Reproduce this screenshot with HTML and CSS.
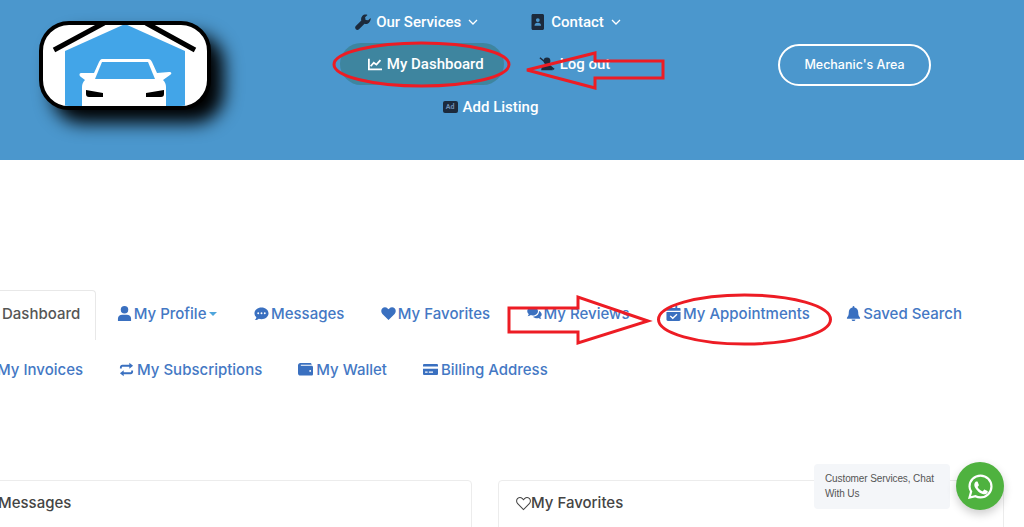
FILE: index.html

```html
<!DOCTYPE html>
<html lang="en">
<head>
  <meta charset="UTF-8" />
  <meta name="viewport" content="width=device-width, initial-scale=1.0" />
  <title>My Dashboard</title>
  <link rel="stylesheet" href="styles.css">
</head>
<body>
  <header class="site-header">
    <a class="logo" href="#">
      <svg viewBox="43 25 164 81" width="164" height="81">
        <path fill="#42a5e8" d="M65 106V51l60-27 60 27v55z"/>
        <path stroke="#000" stroke-width="5" fill="none" d="M54 50l50-27M146 23l49 27"/>
        <path fill="#fff" d="M102 59h46c2 0 3 1 4 3l5 11 12-1c3 0 3 2 1 3l-7 5c2 2 3 4 3 7v19H82V87c0-3 1-5 3-7l-4-3c-2-1-2-4 0-4l13 0 5-11c1-2 2-3 3-3z"/>
        <path fill="#42a5e8" d="M102 62h46l7 17H95z"/>
        <path fill="#000" d="M86 90l17 3v4H89c-2 0-3-1-3-3zM164 90l-18 3v4h15c2 0 3-1 3-3z"/>
      </svg>
    </a>
    <nav class="main-nav">
      <a class="nav-link" href="#">
        <svg class="nav-icon" viewBox="0 0 16 16"><path d="M15.6 3.9l-2.4 2.4-2.6-.4-.5-2.6L12.5.9C10.600.2 8.500.7 7.300 2 6.100 3.200 5.800 5 6.300 6.500L.8 12c-.9.900-.9 2.300 0 3.200.9.900 2.300.9 3.200 0l5.500-5.500c1.500.5 3.300.2 4.500-1 1.300-1.300 1.900-3.100 1.600-4.800z"/></svg>
        Our Services
        <svg class="chevron" viewBox="0 0 10 6"><path d="M1 1l4 4 4-4"/></svg>
      </a>
      <a class="nav-link" href="#">
        <svg class="nav-icon" viewBox="0 0 16 16"><path fill-rule="evenodd" d="M3 0h9.500C13.300 0 14 .7 14 1.500v13c0 .8-.7 1.500-1.500 1.500H3c-.8 0-1.500-.7-1.500-1.500v-13C1.500.7 2.200 0 3 0zm4.800 4.200a1.900 1.900 0 100 3.800 1.900 1.900 0 000-3.800zM4.500 11.800h6.600c0-1.700-1.200-3-3.300-3s-3.300 1.300-3.300 3z"/></svg>
        Contact
        <svg class="chevron" viewBox="0 0 10 6"><path d="M1 1l4 4 4-4"/></svg>
      </a>
      <a class="nav-link nav-active" href="#">
        <svg class="nav-icon icon-white" viewBox="0 0 16 16"><path d="M0 2h2v11h14v2H0z"/><path d="M3 10.500l3.500-4 3 2.200 4.500-5" fill="none" stroke="#fff" stroke-width="2"/></svg>
        My Dashboard
      </a>
      <a class="nav-link" href="#">
        <svg class="nav-icon" viewBox="0 0 18 16"><circle cx="9" cy="4.500" r="3.800"/><path d="M2.500 15c0-3.500 2.500-5.500 6.500-5.500s6.500 2 6.500 5.500z"/><path d="M1 1l16 13" stroke="#1c2a3c" stroke-width="1.600"/></svg>
        Log out
      </a>
      <a class="nav-link nav-listing" href="#">
        <span class="ad-badge">Ad</span>
        Add Listing
      </a>
    </nav>
    <a class="area-btn" href="#">Mechanic's Area</a>
  </header>

  <main class="dashboard">
    <ul class="tabs">
      <li class="tab tab-active"><a href="#">Dashboard</a></li>
      <li class="tab"><a href="#">
        <svg viewBox="0 0 16 16"><circle cx="8" cy="4" r="4"/><path d="M1 16v-2.500C1 11 3 9.300 5.500 9.300h5c2.500 0 4.500 1.700 4.500 4.200V16z"/></svg>
        My Profile<span class="caret"></span></a></li>
      <li class="tab"><a href="#">
        <svg viewBox="0 0 16 16"><path fill-rule="evenodd" d="M8 1.500c4.200 0 7.500 2.800 7.500 6.200S12.200 14 8 14c-1 0-2-.2-2.900-.5C4.300 14.200 2.800 15 .8 15c1-1 1.600-2.200 1.700-3.100C1.200 10.800.5 9.300.5 7.700.5 4.300 3.800 1.500 8 1.500zM4.500 6.700a1 1 0 100 2 1 1 0 000-2zm3.500 0a1 1 0 100 2 1 1 0 000-2zm3.500 0a1 1 0 100 2 1 1 0 000-2z"/></svg>
        Messages</a></li>
      <li class="tab"><a href="#">
        <svg viewBox="0 0 16 16"><path d="M8 15L1.500 8.400C-.2 6.600-.1 3.900 1.500 2.400 3.100.9 5.600 1.100 7.100 2.600L8 3.500l.9-.9c1.500-1.500 4-1.700 5.600-.2 1.600 1.500 1.700 4.200 0 6z"/></svg>
        My Favorites</a></li>
      <li class="tab"><a href="#">
        <svg viewBox="0 0 16 16"><path d="M6 1c3.200 0 5.700 2 5.700 4.500S9.200 10 6 10c-.7 0-1.400-.1-2-.3C3.200 10.300 2 10.800.7 10.800c.7-.7 1.100-1.500 1.200-2.200C.9 7.800.3 6.700.3 5.500.3 3 2.800 1 6 1z"/><path d="M12.800 5.200c1.700.7 2.900 2.100 2.900 3.700 0 1.100-.5 2-1.500 2.800.1.700.5 1.400 1.100 2-1.100 0-2.200-.4-2.900-1-.6.200-1.200.3-1.800.3-1.700 0-3.200-.6-4.100-1.600 3.400-.1 6.300-2.500 6.300-5.600z"/></svg>
        My Reviews</a></li>
      <li class="tab"><a href="#">
        <svg viewBox="0 0 16 16"><path fill-rule="evenodd" d="M4 0h2v2h4V0h2v2h2.500c.6 0 1 .4 1 1v2H.5V3c0-.6.4-1 1-1H4zM.5 6.300h15v8.200c0 .8-.7 1.500-1.500 1.500H2c-.8 0-1.500-.7-1.500-1.500zm10.700 2L7.200 12 5 10l-1 1 3.200 3 5-4.600z"/></svg>
        My Appointments</a></li>
      <li class="tab"><a href="#">
        <svg viewBox="0 0 16 16"><path d="M8 0c.6 0 1 .4 1 1v.7c2.400.5 4 2.500 4 4.800 0 3.200.7 4.500 2 6v1H1v-1c1.300-1.500 2-2.800 2-6 0-2.300 1.600-4.300 4-4.800V1c0-.6.400-1 1-1zM6 14.300h4c0 1-.9 1.700-2 1.700s-2-.7-2-1.700z"/></svg>
        Saved Search</a></li>
    </ul>
    <ul class="tabs tabs-second">
      <li class="tab"><a href="#">
        <svg viewBox="0 0 16 16"><path d="M3 0h10v16l-2-1.500L9 16l-2-1.500L5 16l-2-1.500z"/></svg>
        My Invoices</a></li>
      <li class="tab"><a href="#">
        <svg viewBox="0 0 16 16"><path d="M1 7V5.500C1 4.100 2.100 3 3.500 3H11V.8L15 4l-4 3.200V5H3.500c-.3 0-.5.200-.5.500V7zM15 9v1.500c0 1.400-1.100 2.500-2.500 2.500H5v2.200L1 12l4-3.200V11h7.500c.3 0 .5-.2.500-.5V9z"/></svg>
        My Subscriptions</a></li>
      <li class="tab"><a href="#">
        <svg viewBox="0 0 16 16"><path fill-rule="evenodd" d="M2.500 1H13c.8 0 1.500.7 1.500 1.500v.5H3v1h11.500c.8 0 1.500.7 1.500 1.500v7.500c0 .8-.7 1.500-1.500 1.500h-12C1.100 14.500 0 13.400 0 12V3.500C0 2.100 1.100 1 2.500 1zM13 8.500a1 1 0 100 2 1 1 0 000-2z"/></svg>
        My Wallet</a></li>
      <li class="tab"><a href="#">
        <svg viewBox="0 0 18 16"><path fill-rule="evenodd" d="M1.500 1.500h15c.8 0 1.500.7 1.500 1.500v1.500H0V3c0-.8.7-1.500 1.500-1.500zM0 7h18v6c0 .8-.7 1.500-1.500 1.500h-15C.7 14.500 0 13.800 0 13zm2.500 3.500v1.500h3v-1.500zm4.500 0v1.500h5v-1.500z"/></svg>
        Billing Address</a></li>
    </ul>

    <div class="cards">
      <section class="card card-left"><h2>Messages</h2></section>
      <section class="card">
        <h2><svg class="heart" viewBox="0 0 16 16"><path d="M8 14.500L1.800 8.100C.2 6.500.3 4 1.800 2.600 3.300 1.300 5.500 1.500 6.900 2.900L8 4l1.100-1.100c1.400-1.400 3.600-1.600 5.100-.3 1.500 1.400 1.600 3.900 0 5.500z"/></svg>My Favorites</h2>
      </section>
    </div>
  </main>

  <div class="chat">
    <div class="chat-text">Customer Services, Chat With Us</div>
    <a class="chat-btn" href="#">
      <svg viewBox="0 0 32 32" width="27" height="27"><path fill="none" stroke="#fff" stroke-width="2.600" d="M3 29l1.900-7C3.600 19.900 3 18 3 16 3 8.800 8.800 3 16 3s13 5.800 13 13-5.800 13-13 13c-2.100 0-4.100-.5-5.900-1.500z"/><path fill="#fff" d="M12 9.500c-.4-.9-.8-.9-1.200-.9h-1c-.4 0-.9.100-1.400.7-.5.500-1.800 1.800-1.800 4.300s1.800 4.900 2.100 5.300c.300.300 3.500 5.600 8.700 7.600 4.300 1.700 5.100 1.300 6 1.200-.1 0 .1 0 0 0 .9-.1 2.900-1.200 3.300-2.300-.1 0 0 0 0 0 .4-1.100.4-2.100.3-2.300-.1-.2-.5-.3-1-.6l-3.400-1.700c-.5-.2-.8-.3-1.200.2l-1.500 1.900c-.3.400-.6.400-1.100.2-.5-.3-2.200-.8-4.100-2.500-1.500-1.300-2.500-3-2.800-3.500-.3-.5 0-.8.200-1l.8-.9c.2-.3.3-.5.500-.8.200-.3.100-.6 0-.9z" transform="translate(3.500 3.500) scale(.78)"/></svg>
    </a>
  </div>

  <svg class="markup" viewBox="0 0 1024 527" width="1024" height="527">
    <ellipse cx="421.500" cy="64.500" rx="87.500" ry="21.500"/>
    <path d="M527 70l68-17v8h68v17h-68v10z"/>
    <ellipse cx="744.500" cy="319.500" rx="86" ry="24.500"/>
    <path d="M509 308h69v-11l70 24-70 22v-11h-69z"/>
  </svg>
</body>
</html>
```

FILE: styles.css

```css
* {
  box-sizing: border-box;
}
html, body {
  height: 100%;
}
body {
  margin: 0;
  position: relative;
  overflow: hidden;
  background: #fff;
  font-family: 'Inter', sans-serif;
  color: #444;
}
a {
  text-decoration: none;
  color: inherit;
}

/* header */
.site-header {
  display: flex;
  align-items: flex-start;
  height: 160px;
  padding: 1px 0 0 39px;
  background: #4b97cd;
}
.logo {
  display: flex;
  align-items: center;
  justify-content: center;
  width: 172px;
  height: 89px;
  margin-top: 20px;
  background: #fff;
  border: 4px solid #000;
  border-radius: 30px;
  box-shadow: 13px 13px 18px #000;
  overflow: hidden;
}
.main-nav {
  display: flex;
  flex-wrap: wrap;
  justify-content: center;
  width: 322px;
  margin-left: 116px;
}
.nav-link {
  display: flex;
  align-items: center;
  gap: 5px;
  height: 42px;
  padding: 0 26px;
  font-family: 'Roboto', sans-serif;
  font-size: 15px;
  font-weight: 500;
  color: #fff;
  white-space: nowrap;
}
.nav-listing {
  margin-left: 5px;
  padding-top: 1px;
}
.nav-icon {
  width: 16px;
  height: 16px;
  fill: #1c2a3c;
}
.nav-icon.icon-white {
  fill: #fff;
}
.chevron {
  width: 10px;
  height: 6px;
  margin-left: 2px;
  fill: none;
  stroke: #fff;
  stroke-width: 1.300;
}
.nav-active {
  gap: 5px;
  width: 164px;
  margin-right: 9px;
  padding: 0 20px 0 28px;
  border-radius: 21px;
  background: #3e859f;
}
.ad-badge {
  width: 15px;
  height: 12px;
  border-radius: 2px;
  background: #1c2a3c;
  color: #6f8fb5;
  font-size: 7px;
  font-weight: 700;
  line-height: 12px;
  text-align: center;
}
.area-btn {
  display: flex;
  align-items: center;
  justify-content: center;
  width: 153px;
  height: 42px;
  margin: 43px 0 0 129px;
  padding-bottom: 2px;
  border: 2px solid #fff;
  border-radius: 21px;
  font-size: 12.500px;
  font-weight: 500;
  color: #fff;
}

/* tabs */
.dashboard {
  padding-top: 130px;
}
.tabs {
  display: flex;
  gap: 4.500px;
  margin: 0 0 0 -14px;
  padding: 0;
  list-style: none;
}
.tabs-second {
  gap: 4px;
  margin: 6px 0 0 -37px;
}
.tab a {
  display: flex;
  align-items: center;
  gap: 2px;
  height: 50px;
  padding: 0 15px 5px;
  border: 1px solid transparent;
  border-bottom: 0;
  border-radius: 4px 4px 0 0;
  font-size: 15px;
  font-weight: 450;
  color: #4478c4;
  white-space: nowrap;
}
.tabs-second .tab a {
  gap: 3px;
}
.tab a svg {
  width: 15px;
  height: 15px;
  fill: #3a70c0;
}
.tab-active a {
  border-color: #e8e8e8;
  color: #555;
}
.caret {
  width: 0;
  height: 0;
  margin: 1px 0 0 1px;
  border: 4px solid transparent;
  border-top-color: #4fa5dc;
  border-bottom: 0;
}

/* cards */
.cards {
  display: flex;
  gap: 26px;
  height: 47px;
  margin: 84px 20px 0 -20px;
  overflow: hidden;
}
.card {
  flex: 1;
  height: 120px;
  padding: 12px 17px;
  border: 1px solid #ececec;
  border-radius: 4px;
}
.card-left {
  flex: none;
  width: 492px;
}
.card h2 {
  display: flex;
  align-items: center;
  margin: 0;
  font-size: 15px;
  font-weight: 450;
  line-height: 20px;
  color: #444;
}
.heart {
  width: 15px;
  height: 15px;
  fill: none;
  stroke: #444;
  stroke-width: 1.100;
}

/* whatsapp widget */
.chat {
  position: fixed;
  right: 20px;
  bottom: 17px;
  display: flex;
  align-items: center;
  gap: 6px;
}
.chat-text {
  width: 136px;
  height: 45px;
  padding: 7px 11px;
  border-radius: 4px;
  background: #f4f6f9;
  font-family: 'Liberation Sans', sans-serif;
  font-size: 10px;
  letter-spacing: -0.1px;
  line-height: 15.500px;
  color: #555;
}
.chat-btn {
  display: flex;
  align-items: center;
  justify-content: center;
  width: 48px;
  height: 48px;
  border-radius: 50%;
  background: #4fb23f;
  box-shadow: 0 4px 10px rgba(0,0,0,0.2);
}

/* red hand-drawn markup over the screenshot */
.markup {
  position: absolute;
  top: 0;
  left: 0;
  pointer-events: none;
}
.markup ellipse, .markup path {
  fill: none;
  stroke: #ed1c24;
  stroke-width: 3;
}
```
